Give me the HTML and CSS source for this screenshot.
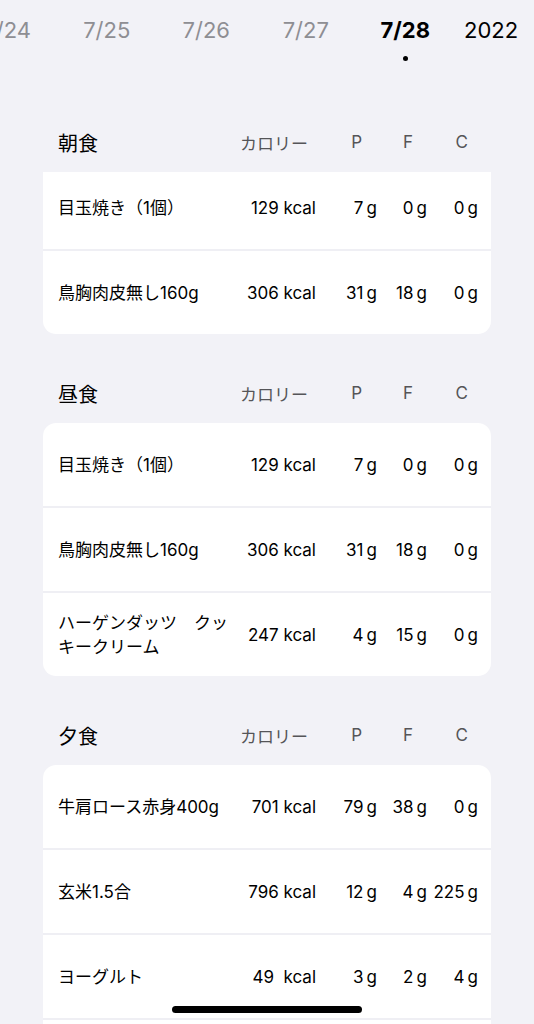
FILE: index.html
```html
<!DOCTYPE html>
<html lang="ja">
  <head>
    <meta charset="UTF-8" />
    <meta name="viewport" content="width=device-width, initial-scale=1.0" />
    <title>食事記録</title>
    <link rel="stylesheet" href="styles.css">
  </head>
  <body>
    <div id="date-bar">
      <div class="dates">
        <div class="date">7/24</div>
        <div class="date">7/25</div>
        <div class="date">7/26</div>
        <div class="date">7/27</div>
        <div class="date selected">7/28<span class="dot"></span></div>
      </div>
      <div class="year">2022</div>
    </div>

    <div class="meal">
      <div class="meal-header">
        <span class="meal-title">朝食</span>
        <span class="col-kcal">カロリー</span>
        <span class="col-p">P</span>
        <span class="col-f">F</span>
        <span class="col-c">C</span>
      </div>
      <div class="card scrolled">
        <div class="row first">
          <span class="name">目玉焼き（1個）</span>
          <span>129 kcal</span><span>7&#8201;g</span><span>0&#8201;g</span><span>0&#8201;g</span>
        </div>
        <div class="row">
          <span class="name">鳥胸肉皮無し160g</span>
          <span>306 kcal</span><span>31&#8201;g</span><span>18&#8201;g</span><span>0&#8201;g</span>
        </div>
      </div>
    </div>

    <div class="meal">
      <div class="meal-header">
        <span class="meal-title">昼食</span>
        <span class="col-kcal">カロリー</span>
        <span class="col-p">P</span>
        <span class="col-f">F</span>
        <span class="col-c">C</span>
      </div>
      <div class="card">
        <div class="row">
          <span class="name">目玉焼き（1個）</span>
          <span>129 kcal</span><span>7&#8201;g</span><span>0&#8201;g</span><span>0&#8201;g</span>
        </div>
        <div class="row">
          <span class="name">鳥胸肉皮無し160g</span>
          <span>306 kcal</span><span>31&#8201;g</span><span>18&#8201;g</span><span>0&#8201;g</span>
        </div>
        <div class="row">
          <span class="name">ハーゲンダッツ　クッキークリーム</span>
          <span>247 kcal</span><span>4&#8201;g</span><span>15&#8201;g</span><span>0&#8201;g</span>
        </div>
      </div>
    </div>

    <div class="meal">
      <div class="meal-header">
        <span class="meal-title">夕食</span>
        <span class="col-kcal">カロリー</span>
        <span class="col-p">P</span>
        <span class="col-f">F</span>
        <span class="col-c">C</span>
      </div>
      <div class="card">
        <div class="row">
          <span class="name">牛肩ロース赤身400g</span>
          <span>701 kcal</span><span>79&#8201;g</span><span>38&#8201;g</span><span>0&#8201;g</span>
        </div>
        <div class="row">
          <span class="name">玄米1.5合</span>
          <span>796 kcal</span><span>12&#8201;g</span><span>4&#8201;g</span><span>225&#8201;g</span>
        </div>
        <div class="row">
          <span class="name">ヨーグルト</span>
          <span>49&nbsp;&nbsp;kcal</span><span>3&#8201;g</span><span>2&#8201;g</span><span>4&#8201;g</span>
        </div>
        <div class="row">
          <span class="name"></span>
          <span></span><span></span><span></span><span></span>
        </div>
      </div>
    </div>

    <div class="home-bar"></div>
  </body>
</html>
```

FILE: styles.css
```css
* {
  box-sizing: border-box;
}
body {
  margin: 0;
  background-color: #f2f2f7;
  font-family: Inter, "Noto Sans CJK JP", sans-serif;
  color: #000;
  overflow: hidden;
}

/* date strip */
#date-bar {
  display: flex;
  height: 83px;
  padding-top: 15px;
}
.dates {
  flex: 1;
  display: flex;
  justify-content: flex-end;
  overflow: hidden;
}
.date {
  flex: 0 0 99.5px;
  text-align: center;
  font-size: 22px;
  line-height: 30px;
  color: #8e8e93;
  position: relative;
}
.date.selected {
  color: #000;
  font-weight: 700;
}
.dot {
  position: absolute;
  left: 50%;
  top: 41px;
  width: 5px;
  height: 5px;
  margin-left: -2.5px;
  border-radius: 50%;
  background: #000;
}
.year {
  flex: 0 0 79px;
  padding-left: 9px;
  font-size: 22px;
  line-height: 30px;
  text-align: left;
}

/* meals */
.meal {
  margin-top: 29px;
  width: 448px;
  margin-left: 43px;
}
.meal-header,
.row {
  display: grid;
  grid-template-columns: 1fr 80px 61px 50px 51px;
  align-items: center;
  padding: 0 13px 0 15px;
}
.meal-header {
  height: 60px;
  color: #555558;
  font-size: 17px;
}
.meal-title {
  font-size: 20px;
  color: #000;
}
.col-kcal { text-align: right; padding-right: 8px; margin-left: -6px; }
.col-p { text-align: right; padding-right: 15px; }
.col-f { text-align: right; padding-right: 14px; }
.col-c { text-align: right; padding-right: 10px; }

.card {
  background: #efeff4;
  border-radius: 13px;
  overflow: hidden;
  display: flex;
  flex-direction: column;
  gap: 2px;
}
.card.scrolled {
  border-top-left-radius: 0;
  border-top-right-radius: 0;
}
.row {
  height: 83px;
  background: #fff;
  font-size: 17px;
  line-height: 24px;
}
.row.first {
  height: 77px;
  padding-bottom: 6px;
}
.row span {
  text-align: right;
}
.row .name {
  text-align: left;
  padding-right: 4px;
}

.home-bar {
  position: fixed;
  left: 172px;
  top: 1006px;
  width: 190px;
  height: 7px;
  border-radius: 4px;
  background: #000;
}
```
